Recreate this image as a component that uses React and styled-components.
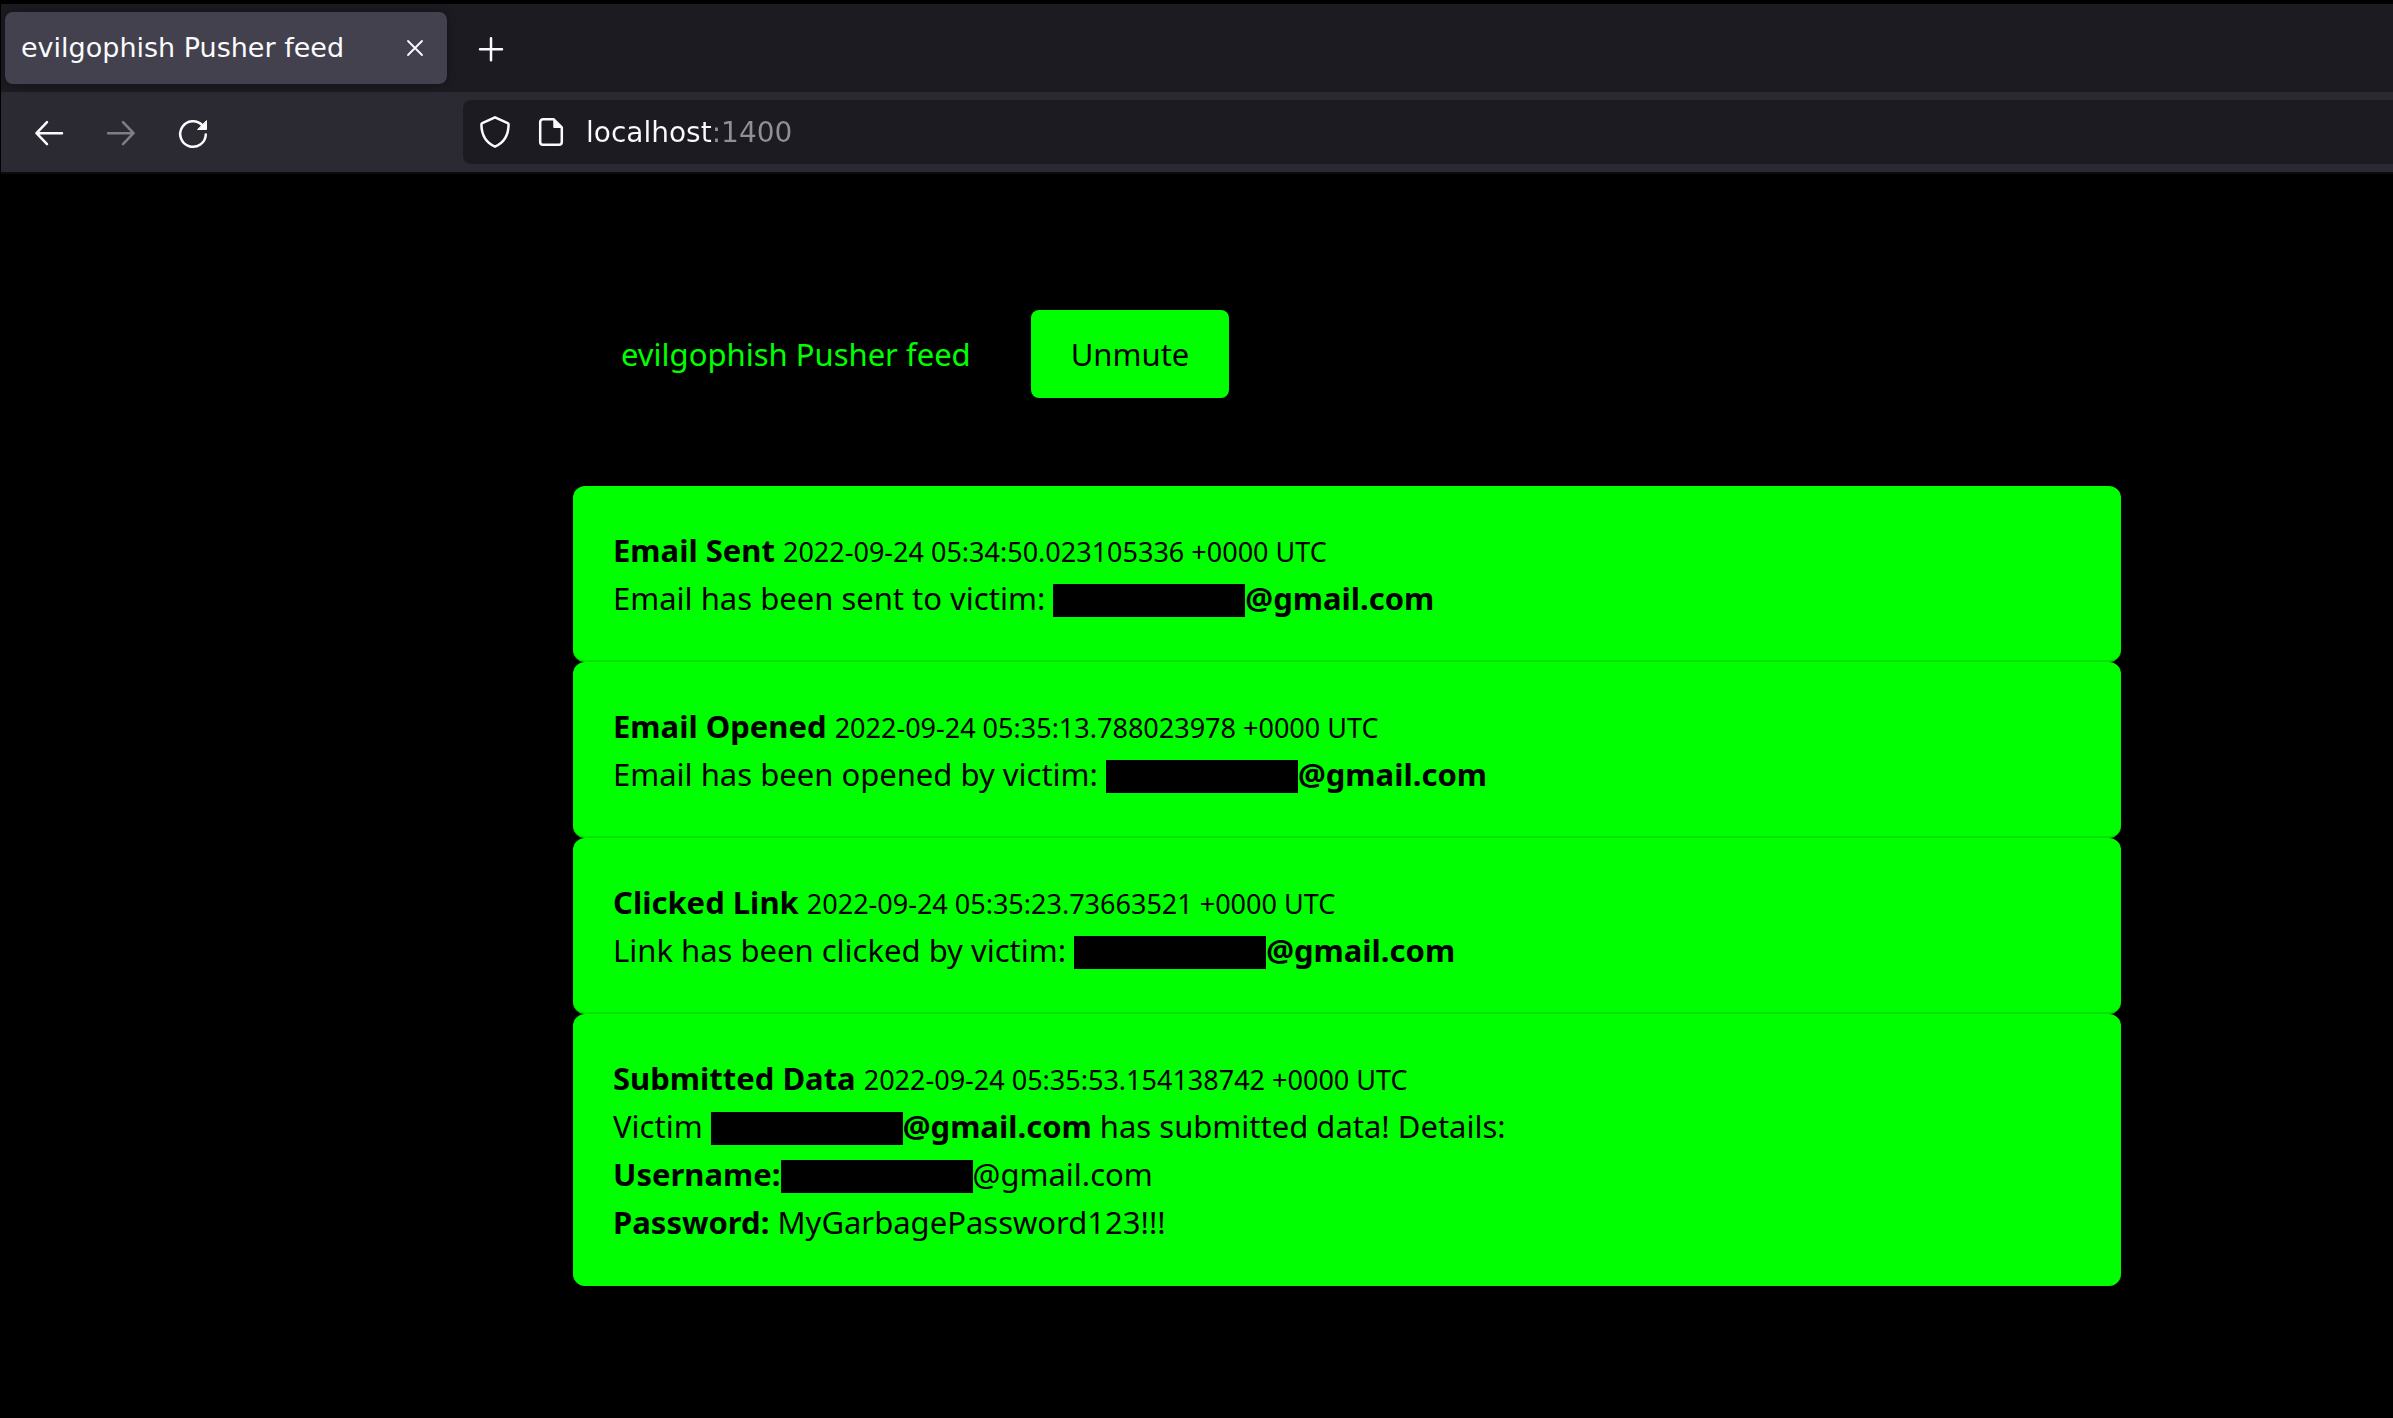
import React, { useState } from "react";
import styled, { createGlobalStyle } from "styled-components";

const GlobalStyle = createGlobalStyle`
  *, *::before, *::after { box-sizing: border-box; }
  body { margin: 0; background: #000; }
  button, input { font: inherit; }
`;

const Window = styled.div`
  min-height: 100vh;
  padding: 4px 0 0 1px;
  background: #000;
  font-family: "DejaVu Sans", sans-serif;
`;

const TabStrip = styled.div`
  display: flex;
  align-items: center;
  gap: 28px;
  height: 88px;
  padding: 0 4px;
  background: #1c1b22;
`;

const Tab = styled.div`
  display: flex;
  align-items: center;
  justify-content: space-between;
  width: 442px;
  height: 72px;
  padding: 0 16px;
  border-radius: 8px;
  background: #42414d;
  box-shadow: 0 0 8px rgba(0, 0, 0, 0.4);
  color: #fbfbfe;
  font-size: 27px;
  line-height: 32px;
  white-space: nowrap;
`;

const IconButton = styled.button`
  display: flex;
  align-items: center;
  justify-content: center;
  flex: none;
  width: 32px;
  height: 32px;
  padding: 0;
  border: 0;
  background: none;
  color: #fbfbfe;
  opacity: ${(p) => (p.disabled ? 0.4 : 1)};
`;

const Toolbar = styled.div`
  display: flex;
  align-items: center;
  height: 82px;
  padding-left: 32px;
  background: #2b2a33;
  border-bottom: 2px solid #0c0c0d;
`;

const NavButtons = styled.div`
  display: flex;
  gap: 40px;
  width: 430px;
  flex: none;
`;

const AddressBar = styled.label`
  display: flex;
  align-items: center;
  flex: 1;
  height: 64px;
  padding-left: 16px;
  border-radius: 8px 0 0 8px;
  background: #1c1b22;
  color: #fbfbfe;
`;

const AddressIcons = styled.span`
  display: flex;
  gap: 24px;
  margin-right: 19px;
`;

const AddressInput = styled.input`
  flex: 1;
  min-width: 0;
  height: 40px;
  padding: 0;
  border: 0;
  outline: 0;
  background: linear-gradient(90deg, #fbfbfe 126px, #8f8f94 126px);
  background-clip: text;
  color: transparent;
  font-size: 28px;
`;

const Page = styled.main`
  padding: 136px 272px 120px 572px;
  color: #000;
  font-family: "Noto Sans", "Open Sans", sans-serif;
  font-size: 31px;
  line-height: 48px;
`;

const Header = styled.header`
  display: flex;
  align-items: center;
  gap: 60px;
  padding-left: 48px;
  margin-bottom: 88px;
`;

const Brand = styled.a`
  color: #0f0;
  text-decoration: none;
`;

const MuteButton = styled.button`
  height: 88px;
  padding: 0 40px;
  border: 0;
  border-radius: 8px;
  background: #0f0;
  color: #000;
`;

const Feed = styled.ul`
  margin: 0;
  padding: 0;
  list-style: none;
`;

const Card = styled.li`
  padding: 40px 40px 38px;
  border-bottom: 2px solid #00e400;
  border-radius: 12px;
  background: #0f0;

  &:last-child { border-bottom-color: #0f0; }
`;

const Line = styled.div`
  height: 48px;
  white-space: nowrap;
`;

const Timestamp = styled.time`
  font-size: 27px;
`;

const Redacted = styled.span`
  display: inline-block;
  width: 192px;
  height: 33px;
  background: #000;
  vertical-align: -7px;
`;

const Svg = ({ size = 32, children }) => (
  <svg
    width={size}
    height={size}
    viewBox={`0 0 ${size} ${size}`}
    fill="none"
    stroke="currentColor"
    strokeWidth="2.5"
    strokeLinecap="round"
    strokeLinejoin="round"
    overflow="visible"
    aria-hidden="true"
  >
    {children}
  </svg>
);

const CloseIcon = () => (
  <Svg><path strokeWidth="1.8" d="M9 9l14 14M23 9L9 23" /></Svg>
);
const PlusIcon = () => (
  <Svg><path d="M16 6.200v22M5 17.200h22" /></Svg>
);
const BackIcon = () => (
  <Svg><path d="M3.500 17.200h25.500M14 6.200L3.500 17.200l10.500 11" /></Svg>
);
const ForwardIcon = () => (
  <Svg><path d="M28.500 17.200H3M18 6.200l10.500 11-10.500 11" /></Svg>
);
const ReloadIcon = () => (
  <Svg>
    <path d="M28.800 18.500A12.800 12.800 0 1 1 25.500 9.400" />
    <path d="M29.500 5v8.500h-8.500z" fill="currentColor" strokeWidth="1" />
  </Svg>
);
const ShieldIcon = () => (
  <Svg>
    <path d="M16 1.300L28.700 7.200Q29.600 7.700 29.600 8.800C29.400 19.500 25.500 26.500 16 30.700 6.500 26.500 2.600 19.500 2.400 8.800Q2.400 7.700 3.300 7.200z" />
  </Svg>
);
const PageIcon = () => (
  <Svg>
    <path d="M8 3.200h10.500l8.300 8.300V26a2.800 2.800 0 0 1-2.800 2.800H8a2.800 2.800 0 0 1-2.800-2.800V6a2.800 2.800 0 0 1 2.800-2.800z" />
    <path d="M18.800 3.500v8h8z" fill="currentColor" strokeWidth="1" />
  </Svg>
);

const Victim = () => (
  <b><Redacted />@gmail.com</b>
);

const events = [
  {
    title: "Email Sent",
    time: "2022-09-24 05:34:50.023105336 +0000 UTC",
    lines: [<>Email has been sent to victim: <Victim /></>],
  },
  {
    title: "Email Opened",
    time: "2022-09-24 05:35:13.788023978 +0000 UTC",
    lines: [<>Email has been opened by victim: <Victim /></>],
  },
  {
    title: "Clicked Link",
    time: "2022-09-24 05:35:23.73663521 +0000 UTC",
    lines: [<>Link has been clicked by victim: <Victim /></>],
  },
  {
    title: "Submitted Data",
    time: "2022-09-24 05:35:53.154138742 +0000 UTC",
    lines: [
      <>Victim <Victim /> has submitted data! Details:</>,
      <><b>Username:</b><Redacted />@gmail.com</>,
      <><b>Password:</b> MyGarbagePassword123!!!</>,
    ],
  },
];

export default function App() {
  const [url, setUrl] = useState("localhost:1400");
  return (
    <Window>
      <GlobalStyle />
      <TabStrip>
        <Tab>
          <span>evilgophish Pusher feed</span>
          <IconButton aria-label="Close tab"><CloseIcon /></IconButton>
        </Tab>
        <IconButton aria-label="New tab"><PlusIcon /></IconButton>
      </TabStrip>
      <Toolbar>
        <NavButtons>
          <IconButton aria-label="Back"><BackIcon /></IconButton>
          <IconButton aria-label="Forward" disabled><ForwardIcon /></IconButton>
          <IconButton aria-label="Reload"><ReloadIcon /></IconButton>
        </NavButtons>
        <AddressBar>
          <AddressIcons>
            <ShieldIcon />
            <PageIcon />
          </AddressIcons>
          <AddressInput
            aria-label="Address"
            value={url}
            onChange={(e) => setUrl(e.target.value)}
          />
        </AddressBar>
      </Toolbar>
      <Page>
        <Header>
          <Brand href="#">evilgophish Pusher feed</Brand>
          <MuteButton>Unmute</MuteButton>
        </Header>
        <Feed>
          {events.map((event) => (
            <Card key={event.title}>
              <Line><b>{event.title}</b> <Timestamp>{event.time}</Timestamp></Line>
              {event.lines.map((line, i) => <Line key={i}>{line}</Line>)}
            </Card>
          ))}
        </Feed>
      </Page>
    </Window>
  );
}
